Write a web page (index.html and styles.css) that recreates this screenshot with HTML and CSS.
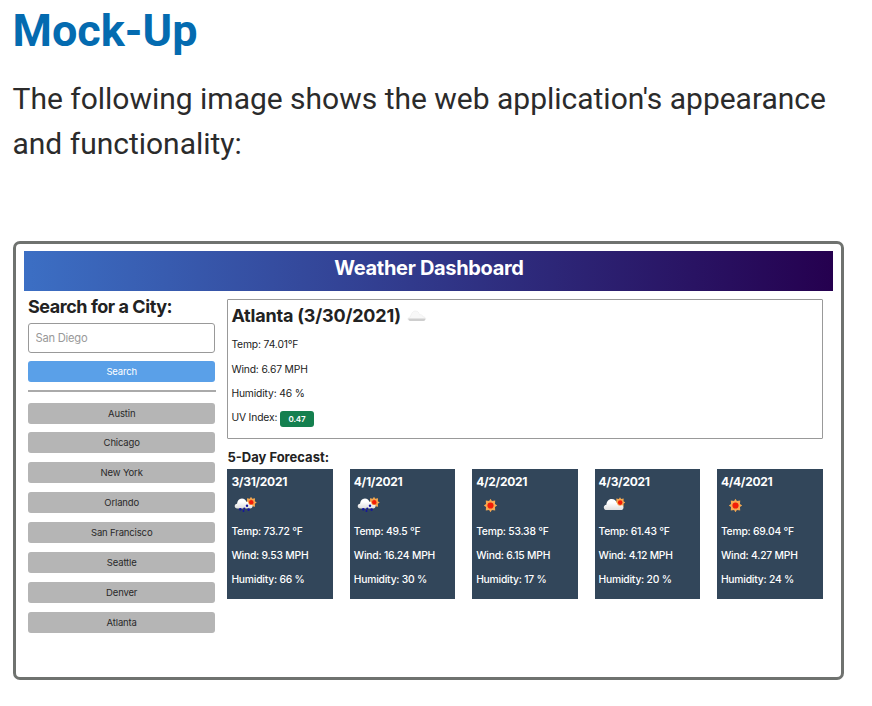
FILE: index.html
```html
<!DOCTYPE html>
<html lang="en">
<head>
<meta charset="utf-8">
<title>Mock-Up</title>
<link rel="stylesheet" href="styles.css">
</head>
<body>
<svg class="defs" aria-hidden="true">
  <defs>
    <linearGradient id="cloudFill" x1="0" y1="0" x2="0" y2="1">
      <stop offset="0.35" stop-color="#ffffff"/>
      <stop offset="1" stop-color="#dedede"/>
    </linearGradient>
    <symbol id="sun" viewBox="0 0 14 14">
      <path d="M7 0.3L8.4 2.5L11.7 2L11.5 5.5L13.7 7L11.5 8.5L11.7 12L8.4 11.5L7 13.7L5.6 11.5L2.3 12L2.5 8.5L0.3 7L2.5 5.5L2.3 2L5.6 2.5Z" fill="#f6a850"/>
      <circle cx="7" cy="7" r="3.1" fill="#f21d08"/>
    </symbol>
    <symbol id="cloud" viewBox="0 0 20 12">
      <path d="M3.5 11.5C-0.2 11.5 0 6.8 3.2 6.5C3.5 3.4 5.2 1 8.3 1C10.8 1 12.5 2.4 13 4.7C14.7 4 16.3 5 16.5 6.5C20.4 6.3 20.5 11.5 17 11.5Z" fill="url(#cloudFill)"/>
    </symbol>
    <symbol id="rain" viewBox="0 0 28 16">
      <use href="#sun" x="14" y="-0.5" width="12" height="12"/>
      <use href="#cloud" x="3" y="0" width="19" height="12.4"/>
      <circle cx="20" cy="5.3" r="2.8" fill="#f6a850"/>
      <circle cx="20.2" cy="5.3" r="2.2" fill="#f21d08"/>
      <g fill="#1414a0"><circle cx="9.3" cy="12.3" r="1.3"/><circle cx="13.3" cy="11.6" r="1.1"/><circle cx="16" cy="8.7" r="1.2"/><circle cx="17.6" cy="12.6" r="1.3"/><circle cx="12.5" cy="14" r="1"/></g>
    </symbol>
  </defs>
</svg>
<main class="page">
  <h1 class="page-title">Mock-Up</h1>
  <p class="intro">The following image shows the web application's appearance and functionality:</p>
  <section class="frame">
    <header class="banner">Weather Dashboard</header>
    <div class="dashboard">
      <aside class="sidebar">
        <h2 class="search-title">Search for a City:</h2>
        <input class="search-input" type="text" placeholder="San Diego" aria-label="City">
        <button class="btn btn-search">Search</button>
        <div class="divider"></div>
        <div class="cities">
          <button class="btn">Austin</button>
          <button class="btn">Chicago</button>
          <button class="btn">New York</button>
          <button class="btn">Orlando</button>
          <button class="btn">San Francisco</button>
          <button class="btn">Seattle</button>
          <button class="btn">Denver</button>
          <button class="btn">Atlanta</button>
        </div>
      </aside>
      <div class="content">
        <section class="today">
          <h2 class="today-title"><span>Atlanta (3/30/2021)</span>
            <svg class="today-icon" viewBox="0 0 20 12"><path d="M3.2 10.5C0 10.5 0.3 7.2 3.4 7C4 3.8 5.8 1 8.4 1C10.8 1 12 2.5 12.5 4.8C14.3 4.3 15.8 5.2 16 6.8C19.6 6.9 19.4 10.5 16.8 10.5Z" fill="#f8f8f8" stroke="#e8e8e8" stroke-width=".5"/><path d="M1.3 8.5H18.3C18.3 9.8 17.8 10.9 16.6 10.9H3.2C2 10.9 1.3 9.8 1.3 8.5Z" fill="#cecece"/></svg>
          </h2>
          <p class="row">Temp: 74.01°F</p>
          <p class="row">Wind: 6.67 MPH</p>
          <p class="row">Humidity: 46 %</p>
          <p class="row">UV Index: <span class="uv">0.47</span></p>
        </section>
        <h3 class="forecast-title">5-Day Forecast:</h3>
        <div class="forecast">
          <article class="card">
            <h4 class="date">3/31/2021</h4>
            <svg class="icon" viewBox="0 0 28 16"><use href="#rain"/></svg>
            <p class="row">Temp: 73.72 °F</p>
            <p class="row">Wind: 9.53 MPH</p>
            <p class="row">Humidity: 66 %</p>
          </article>
          <article class="card">
            <h4 class="date">4/1/2021</h4>
            <svg class="icon" viewBox="0 0 28 16"><use href="#rain"/></svg>
            <p class="row">Temp: 49.5 °F</p>
            <p class="row">Wind: 16.24 MPH</p>
            <p class="row">Humidity: 30 %</p>
          </article>
          <article class="card">
            <h4 class="date">4/2/2021</h4>
            <svg class="icon" viewBox="0 0 28 16"><use href="#sun" x="7.5" y="1.5" width="14" height="14"/></svg>
            <p class="row">Temp: 53.38 °F</p>
            <p class="row">Wind: 6.15 MPH</p>
            <p class="row">Humidity: 17 %</p>
          </article>
          <article class="card">
            <h4 class="date">4/3/2021</h4>
            <svg class="icon" viewBox="0 0 28 16"><use href="#sun" x="15.5" y="0" width="11" height="11"/><use href="#cloud" x="4" y="1" width="21" height="12.6"/><circle cx="21" cy="5.6" r="3.1" fill="#f6a850"/><circle cx="21.2" cy="5.6" r="2.3" fill="#f21d08"/></svg>
            <p class="row">Temp: 61.43 °F</p>
            <p class="row">Wind: 4.12 MPH</p>
            <p class="row">Humidity: 20 %</p>
          </article>
          <article class="card">
            <h4 class="date">4/4/2021</h4>
            <svg class="icon" viewBox="0 0 28 16"><use href="#sun" x="7.5" y="1.5" width="14" height="14"/></svg>
            <p class="row">Temp: 69.04 °F</p>
            <p class="row">Wind: 4.27 MPH</p>
            <p class="row">Humidity: 24 %</p>
          </article>
        </div>
      </div>
    </div>
  </section>
</main>
</body>
</html>
```
FILE: styles.css
```css
* { box-sizing: border-box; }
body { margin: 0; background: #fff; color: #2b2b2b; font-family: Roboto, sans-serif; }
h1, h2, h3, h4, p { margin: 0; }
.defs { display: block; width: 0; height: 0; }
.page { padding: 0 28px 0 12.5px; }
.page-title { padding-top: 4px; font-size: 45px; line-height: 54px; font-weight: 700; color: #046bb0; }
.intro { margin-top: 18px; font-size: 30px; line-height: 45px; letter-spacing: -0.01px; }
.frame {
  margin: 75px 0 0 0.5px; width: 831px; height: 439px;
  padding: 7px 8px; border: 3px solid #6f726f; border-radius: 7px;
  font-family: Inter, sans-serif; color: #222;
}
.banner {
  height: 39.5px; line-height: 34px; text-align: center; padding-left: 1px;
  font-size: 20px; font-weight: 700; letter-spacing: -0.32px; color: #fff;
  background: linear-gradient(90deg, #3c6fc4, #25004f);
}
.dashboard { display: flex; gap: 12px; padding: 0 10px 0 4px; }
.sidebar { width: 187.5px; padding-top: 4.5px; }
.search-title { font-size: 18px; line-height: 24px; font-weight: 700; letter-spacing: -0.45px; white-space: nowrap; }
.search-input {
  display: block; width: 100%; height: 30px; margin-top: 4px; padding: 0 6.5px;
  border: 1px solid #999; border-radius: 3px; font: 11.2px Inter, sans-serif; letter-spacing: -0.25px;
}
.search-input::placeholder { color: #999; }
.btn {
  display: block; width: 100%; height: 21px; padding: 0; border: 0; border-radius: 3px;
  background: #b5b5b5; color: #292929; font: 9.5px/21px Inter, sans-serif; letter-spacing: -0.15px;
}
.btn-search { margin-top: 8px; background: #5aa0e8; color: #fff; }
.divider { height: 2px; margin: 8px -0.5px 10.5px 0; background: #aaa; }
.cities { display: grid; gap: 8.9px; }
.content { width: 596px; padding-top: 8.5px; }
.today { height: 140px; padding: 5px 3px; border: 1px solid #999; border-radius: 1px; }
.today-title { display: flex; align-items: center; gap: 6px; font-size: 18px; line-height: 22px; font-weight: 700; letter-spacing: -0.2px; }
.today-icon { width: 20px; height: 12px; }
.row { font-size: 10.3px; line-height: 24.4px; height: 24.4px; letter-spacing: -0.14px; white-space: nowrap; }
.today-title + .row { margin-top: 5.3px; }
.uv {
  display: inline-block; width: 34px; height: 16px; border-radius: 3px; vertical-align: middle;
  background: #14804f; color: #fff; font-size: 8px; line-height: 16px; font-weight: 600; letter-spacing: -0.1px; text-align: center;
}
.forecast-title { margin-top: 9px; font-size: 13px; line-height: 18px; font-weight: 700; letter-spacing: 0; }
.forecast { display: grid; grid-template-columns: repeat(5, 105.7px); gap: 16.7px; margin-top: 3px; }
.card { height: 130px; padding: 3.5px 4px; background: #32465a; color: #fff; }
.card .row { font-weight: 500; letter-spacing: -0.2px; }
.date { font-size: 12px; line-height: 18px; font-weight: 700; letter-spacing: -0.3px; }
.icon { display: block; width: 28px; height: 16px; margin: 6.5px 0 5.5px; }
```
